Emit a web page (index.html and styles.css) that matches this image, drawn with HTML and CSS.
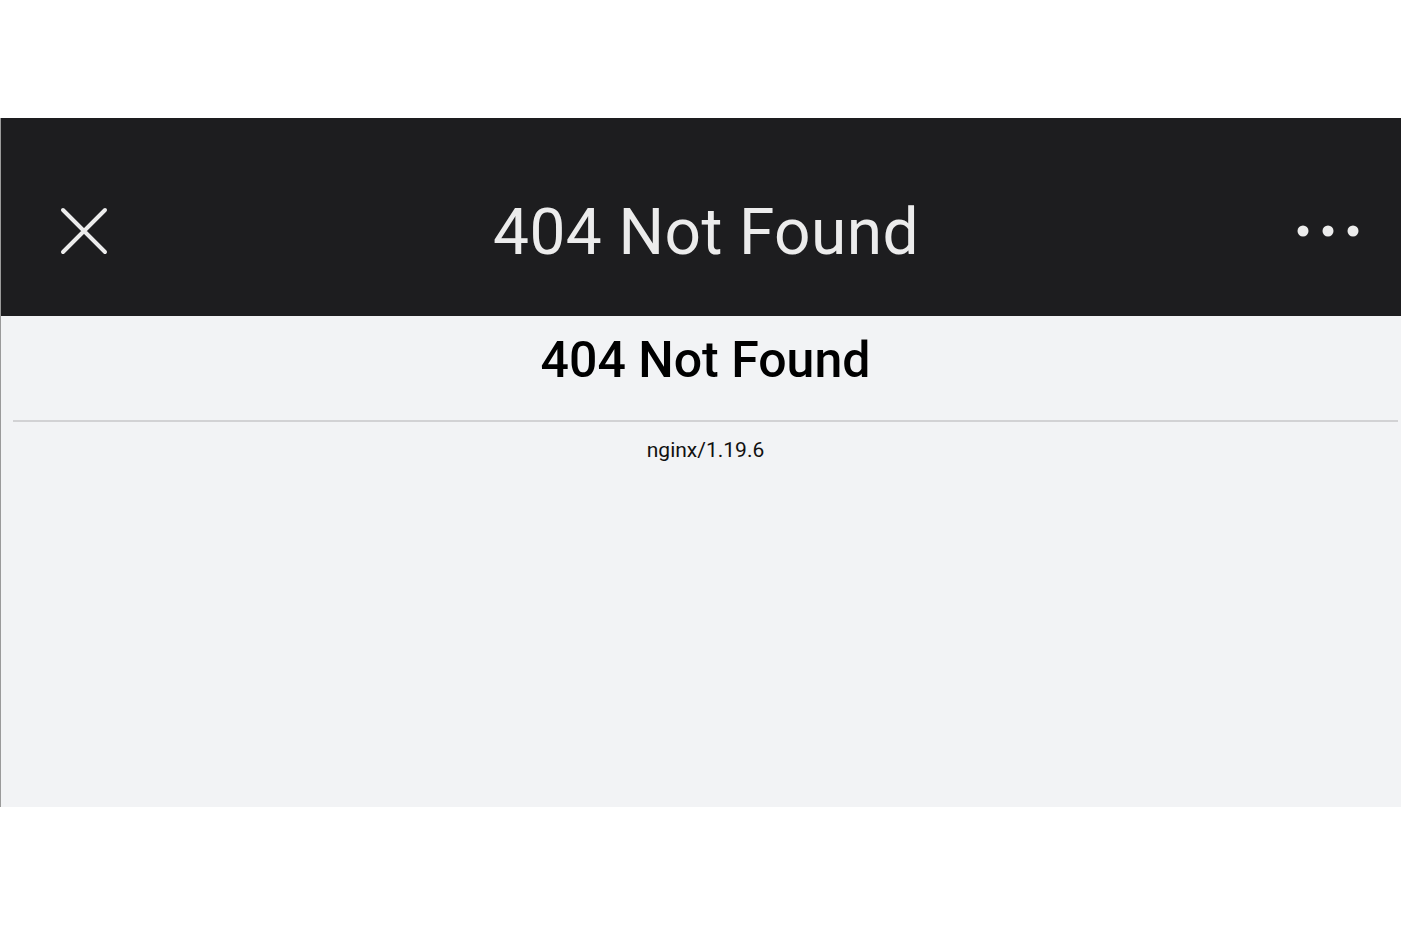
FILE: index.html
```html
<!DOCTYPE html>
<html lang="en">
<head>
<meta charset="utf-8">
<title>404 Not Found</title>
<link rel="stylesheet" href="styles.css">
</head>
<body>
<div class="page">
  <div class="phone">
    <header class="topbar">
      <button class="icon-btn close" aria-label="Close">
        <svg width="50" height="50" viewBox="0 0 50 50">
          <path d="M4 4 L46 46 M46 4 L4 46" stroke="#ececec" stroke-width="4" stroke-linecap="round" fill="none"/>
        </svg>
      </button>
      <div class="title">404 Not Found</div>
      <button class="icon-btn more" aria-label="More">
        <svg width="70" height="16" viewBox="0 0 70 16">
          <circle cx="10" cy="8" r="5.5" fill="#ececec"/>
          <circle cx="35" cy="8" r="5.5" fill="#ececec"/>
          <circle cx="60" cy="8" r="5.5" fill="#ececec"/>
        </svg>
      </button>
    </header>
    <main class="content">
      <h1 class="heading">404 Not Found</h1>
      <hr class="rule">
      <div class="server">nginx/1.19.6</div>
    </main>
  </div>
</div>
</body>
</html>
```
FILE: styles.css
```css
html, body {
  margin: 0;
  padding: 0;
  background: #ffffff;
}

.page {
  padding-top: 118px;
  font-family: Roboto, "Noto Sans", sans-serif;
}

.phone {
  width: 1400px;
  border-left: 1px solid #9a9a9a;
}

.topbar {
  height: 198px;
  background: #1d1d1f;
  display: flex;
  align-items: center;
  justify-content: space-between;
  padding: 28px 38px 0 58px;
  box-sizing: border-box;
}

.icon-btn {
  background: none;
  border: 0;
  padding: 0;
  display: flex;
  align-items: center;
  justify-content: center;
}

.close {
  width: 50px;
  height: 50px;
}

.more {
  width: 70px;
  height: 16px;
}

.title {
  color: #ececec;
  font-size: 64px;
  font-weight: 400;
  letter-spacing: 0.4px;
  margin-left: 10px;
  margin-top: 2px;
}

.content {
  height: 491px;
  background: #f2f3f5;
  box-sizing: border-box;
  padding: 14px 3px 0 12px;
  color: #000;
  text-align: center;
}

.heading {
  margin: 0;
  font-size: 50px;
  font-weight: 500;
  line-height: 60px;
}

.rule {
  margin: 30px 0 0;
  border: 0;
  border-top: 2px solid #d2d2d4;
  height: 0;
}

.server {
  margin-top: 13px;
  font-size: 21px;
  line-height: 30px;
  color: #111;
}
```
